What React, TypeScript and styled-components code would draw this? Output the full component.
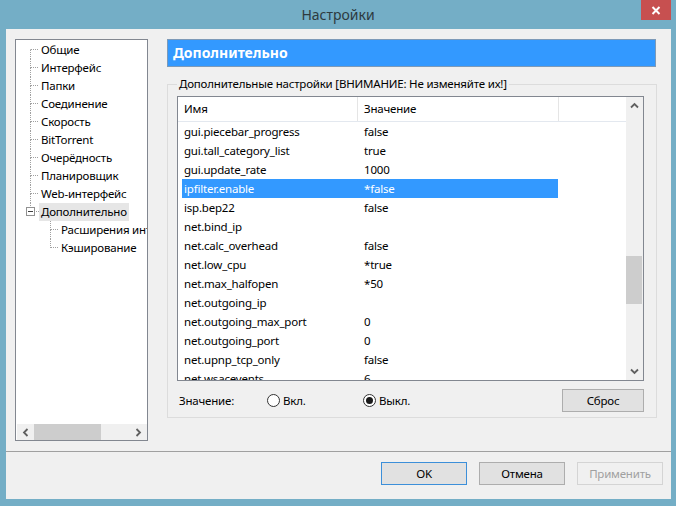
import React from "react";
import styled, { createGlobalStyle } from "styled-components";

const GlobalStyle = createGlobalStyle`
  * { box-sizing: border-box; }
  html, body { margin: 0; padding: 0; }
  body {
    background: #74aec6;
    font-family: "Noto Sans", "DejaVu Sans", sans-serif;
    font-size: 11.5px;
    letter-spacing: -0.2px;
    color: #000;
  }
`;

const Window = styled.div`
  width: 676px;
  height: 506px;
  display: flex;
  flex-direction: column;
  background: #74aec6;
  overflow: hidden;
`;

const TitleBar = styled.div`
  height: 29px;
  flex-shrink: 0;
  display: grid;
  grid-template-columns: 1fr auto 1fr;
  align-items: start;
`;

const Title = styled.div`
  grid-column: 2;
  font-size: 14px;
  letter-spacing: 0;
  line-height: 30px;
  color: #2d3a40;
`;

const CloseButton = styled.div`
  justify-self: end;
  margin-right: 5px;
  width: 30px;
  height: 20px;
  background: #c75050;
  display: flex;
  align-items: center;
  justify-content: center;
`;

const Client = styled.div`
  flex: 1;
  margin: 0 5px 7px 6px;
  background: #f0f0f0;
  display: flex;
  flex-direction: column;
`;

const Body = styled.div`
  display: flex;
  gap: 19px;
  padding: 10px 14px 0 9px;
`;

const TreeBox = styled.div`
  width: 133px;
  height: 402px;
  border: 1px solid #828790;
  background: #fff;
  display: flex;
  flex-direction: column;
`;

const TreeItems = styled.div`
  flex: 1;
  padding-top: 1px;
  overflow: hidden;
`;

const TreeRow = styled.div<{ $level: number }>`
  height: 18px;
  display: flex;
  padding-left: ${(p) => (p.$level === 0 ? 14 : 34)}px;
  white-space: nowrap;
  overflow: hidden;
`;

const ExpanderRow = styled(TreeRow)`
  padding-left: 10px;
`;

const Connector = styled.div`
  width: 8px;
  flex-shrink: 0;
  display: flex;
  flex-direction: column;
`;

const ConnectorTop = styled.div<{ $line: boolean }>`
  height: 9px;
  border-bottom: 1px dotted #a0a0a0;
  border-left: 1px dotted ${(p) => (p.$line ? "#a0a0a0" : "transparent")};
`;

const ConnectorBottom = styled.div<{ $line: boolean }>`
  flex: 1;
  border-left: 1px dotted ${(p) => (p.$line ? "#a0a0a0" : "transparent")};
`;

const TreeLabel = styled.div<{ $selected?: boolean; $gap?: number }>`
  margin-left: ${(p) => p.$gap ?? 1}px;
  padding: 0 2px;
  line-height: 18px;
  min-width: 0;
  overflow: hidden;
  background: ${(p) => (p.$selected ? "#e6e6e6" : "transparent")};
`;

const HScroll = styled.div`
  height: 16px;
  margin: 0 0 0 1px;
  background: #f0f0f0;
  display: flex;
  flex-shrink: 0;
`;

const HArrow = styled.div`
  width: 17px;
  display: flex;
  align-items: center;
  justify-content: center;
`;

const HTrack = styled.div`
  flex: 1;
  display: flex;
`;

const HThumb = styled.div<{ $width: number }>`
  width: ${(p) => p.$width}px;
  background: #cdcdcd;
`;

const Panel = styled.div`
  width: 490px;
  display: flex;
  flex-direction: column;
`;

const PageHeader = styled.div`
  height: 28px;
  margin-right: 1px;
  background: #3399ff;
  border: 1px solid #7d9ab8;
  color: #fff;
  font-weight: bold;
  font-size: 14px;
  letter-spacing: 0;
  line-height: 25px;
  padding-left: 5px;
`;

const GroupBox = styled.fieldset`
  margin: 9px 0 0;
  padding: 4px 12px 5px 9px;
  border: 1px solid #dcdcdc;
  min-width: 0;
`;

const GroupTitle = styled.legend`
  padding: 0 2px;
  line-height: 16px;
  color: #000;
`;

const ListView = styled.div`
  height: 285px;
  border: 1px solid #828790;
  background: #fff;
  display: flex;
  overflow: hidden;
`;

const ListArea = styled.div`
  flex: 1;
  min-width: 0;
  display: flex;
  flex-direction: column;
  overflow: hidden;
`;

const HeaderRow = styled.div`
  height: 25px;
  flex-shrink: 0;
  display: flex;
  border-bottom: 1px solid #e3e8ef;
`;

const HeaderCell = styled.div<{ $width?: number }>`
  ${(p) => (p.$width ? `width: ${p.$width}px; flex-shrink: 0;` : "flex: 1;")}
  padding-left: 6px;
  line-height: 24px;
  border-right: ${(p) => (p.$width ? "1px solid #e5e5e5" : "none")};
  white-space: nowrap;
`;

const Row = styled.div<{ $selected?: boolean }>`
  height: 19px;
  width: 376px;
  margin-left: 4px;
  flex-shrink: 0;
  display: flex;
  line-height: 19px;
  white-space: nowrap;
  background: ${(p) => (p.$selected ? "#3399ff" : "transparent")};
  color: ${(p) => (p.$selected ? "#fff" : "#000")};
`;

const NameCell = styled.div`
  width: 175px;
  padding-left: 2px;
  overflow: hidden;
`;

const ValueCell = styled.div`
  flex: 1;
  padding-left: 7px;
`;

const VScroll = styled.div`
  width: 17px;
  flex-shrink: 0;
  background: #f0f0f0;
  display: flex;
  flex-direction: column;
`;

const VArrow = styled.div`
  height: 17px;
  display: flex;
  align-items: center;
  justify-content: center;
`;

const VTrack = styled.div`
  flex: 1;
`;

const VThumb = styled.div<{ $offset: number; $height: number }>`
  margin: ${(p) => p.$offset}px 1px 0 0;
  height: ${(p) => p.$height}px;
  background: #cdcdcd;
`;

const ValueBar = styled.div`
  display: flex;
  align-items: center;
  margin-top: 8px;
  height: 23px;
`;

const ValueLabel = styled.div`
  width: 90px;
  padding-left: 2px;
`;

const Radio = styled.label<{ $width?: number }>`
  display: flex;
  align-items: center;
  gap: 3px;
  ${(p) => (p.$width ? `width: ${p.$width}px;` : "")}
`;

const RadioCircle = styled.span`
  width: 13px;
  height: 13px;
  border-radius: 50%;
  border: 1px solid #333;
  background: #fff;
  display: flex;
  align-items: center;
  justify-content: center;
`;

const RadioDot = styled.span`
  width: 7px;
  height: 7px;
  border-radius: 50%;
  background: #1a1a1a;
`;

const Spacer = styled.div`
  flex: 1;
`;

const Button = styled.button<{ $width: number; $default?: boolean }>`
  width: ${(p) => p.$width}px;
  height: 23px;
  padding: 0;
  font-family: inherit;
  font-size: 11.5px;
  letter-spacing: -0.2px;
  color: #000;
  background: #e1e1e1;
  border: 1px solid ${(p) => (p.$default ? "#3c8fd9" : "#adadad")};
  &:disabled {
    color: #a0a0a0;
    background: #f0f0f0;
    border-color: #d4d4d4;
  }
`;

const Separator = styled.div`
  margin-top: 10px;
  height: 1px;
  background: #a0a0a0;
`;

const Footer = styled.div`
  display: flex;
  justify-content: flex-end;
  gap: 12px;
  padding: 10px 8px 0 0;
`;

const pages = [
  "Общие",
  "Интерфейс",
  "Папки",
  "Соединение",
  "Скорость",
  "BitTorrent",
  "Очерёдность",
  "Планировщик",
  "Web-интерфейс",
];

const subPages = ["Расширения интерфейса", "Кэширование"];

const settings: [string, string][] = [
  ["gui.piecebar_progress", "false"],
  ["gui.tall_category_list", "true"],
  ["gui.update_rate", "1000"],
  ["ipfilter.enable", "*false"],
  ["isp.bep22", "false"],
  ["net.bind_ip", ""],
  ["net.calc_overhead", "false"],
  ["net.low_cpu", "*true"],
  ["net.max_halfopen", "*50"],
  ["net.outgoing_ip", ""],
  ["net.outgoing_max_port", "0"],
  ["net.outgoing_port", "0"],
  ["net.upnp_tcp_only", "false"],
  ["net.wsacevents", "6"],
];

function Chevron({ dir }: { dir: "up" | "down" | "left" | "right" }) {
  const rot = { up: 0, right: 90, down: 180, left: 270 }[dir];
  return (
    <svg width="9" height="9" viewBox="0 0 9 9" style={{ transform: `rotate(${rot}deg)` }}>
      <path d="M1 6.5 L4.5 3 L8 6.5" fill="none" stroke="#606060" strokeWidth="1.8" />
    </svg>
  );
}

function Expander() {
  return (
    <svg width="13" height="18" viewBox="0 0 13 18">
      <path d="M4.5 0 V4" stroke="#a0a0a0" strokeDasharray="1 1" />
      <rect x="0.5" y="4.5" width="8" height="8" fill="#fff" stroke="#919191" />
      <path d="M2 8.5 H7" stroke="#404040" />
      <path d="M10 8.5 H13" stroke="#a0a0a0" strokeDasharray="1 1" />
    </svg>
  );
}

export default function App() {
  return (
    <Window>
      <GlobalStyle />
      <TitleBar>
        <Title>Настройки</Title>
        <CloseButton>
          <svg width="10" height="9" viewBox="0 0 10 9">
            <path d="M1.5 1 L8.5 8 M8.5 1 L1.5 8" stroke="#fff" strokeWidth="2" />
          </svg>
        </CloseButton>
      </TitleBar>
      <Client>
        <Body>
          <TreeBox>
            <TreeItems>
              {pages.map((name, i) => (
                <TreeRow $level={0} key={name}>
                  <Connector>
                    <ConnectorTop $line={i > 0} />
                    <ConnectorBottom $line />
                  </Connector>
                  <TreeLabel>{name}</TreeLabel>
                </TreeRow>
              ))}
              <ExpanderRow $level={0}>
                <Expander />
                <TreeLabel $selected $gap={0}>
                  Дополнительно
                </TreeLabel>
              </ExpanderRow>
              {subPages.map((name, i) => (
                <TreeRow $level={1} key={name}>
                  <Connector>
                    <ConnectorTop $line />
                    <ConnectorBottom $line={i < subPages.length - 1} />
                  </Connector>
                  <TreeLabel>{name}</TreeLabel>
                </TreeRow>
              ))}
            </TreeItems>
            <HScroll>
              <HArrow>
                <Chevron dir="left" />
              </HArrow>
              <HTrack>
                <HThumb $width={67} />
              </HTrack>
              <HArrow>
                <Chevron dir="right" />
              </HArrow>
            </HScroll>
          </TreeBox>
          <Panel>
            <PageHeader>Дополнительно</PageHeader>
            <GroupBox>
              <GroupTitle>Дополнительные настройки [ВНИМАНИЕ: Не изменяйте их!]</GroupTitle>
              <ListView>
                <ListArea>
                  <HeaderRow>
                    <HeaderCell $width={180}>Имя</HeaderCell>
                    <HeaderCell $width={201}>Значение</HeaderCell>
                    <HeaderCell />
                  </HeaderRow>
                  {settings.map(([name, value]) => (
                    <Row key={name} $selected={name === "ipfilter.enable"}>
                      <NameCell>{name}</NameCell>
                      <ValueCell>{value}</ValueCell>
                    </Row>
                  ))}
                </ListArea>
                <VScroll>
                  <VArrow>
                    <Chevron dir="up" />
                  </VArrow>
                  <VTrack>
                    <VThumb $offset={142} $height={48} />
                  </VTrack>
                  <VArrow>
                    <Chevron dir="down" />
                  </VArrow>
                </VScroll>
              </ListView>
              <ValueBar>
                <ValueLabel>Значение:</ValueLabel>
                <Radio $width={96}>
                  <RadioCircle />
                  Вкл.
                </Radio>
                <Radio>
                  <RadioCircle>
                    <RadioDot />
                  </RadioCircle>
                  Выкл.
                </Radio>
                <Spacer />
                <Button $width={82}>Сброс</Button>
              </ValueBar>
            </GroupBox>
          </Panel>
        </Body>
        <Separator />
        <Footer>
          <Button $width={86} $default>
            OK
          </Button>
          <Button $width={86}>Отмена</Button>
          <Button $width={86} disabled>
            Применить
          </Button>
        </Footer>
      </Client>
    </Window>
  );
}
